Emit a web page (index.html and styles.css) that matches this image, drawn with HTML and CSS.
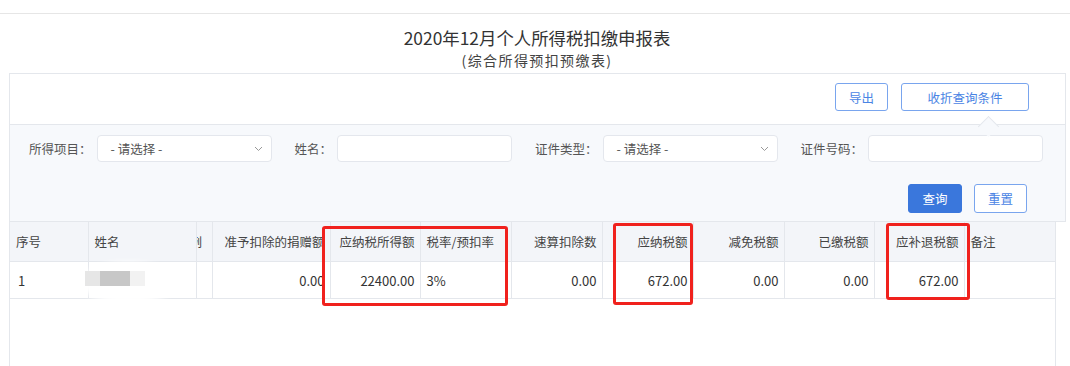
FILE: index.html
```html
<!DOCTYPE html>
<html lang="zh-CN">
<head>
    <meta charset="UTF-8">
    <meta name="viewport" content="width=device-width, initial-scale=1.0">
    <title>个人所得税扣缴申报表</title>
    <link rel="stylesheet" href="styles.css">
</head>
<body>
    <div class="topbar"></div>

    <div class="heading">
        <h1>2020年12月个人所得税扣缴申报表</h1>
        <p>(综合所得预扣预缴表)</p>
    </div>

    <div class="panel">
        <div class="toolbar">
            <button class="btn btn-export">导出</button>
            <button class="btn btn-toggle">收折查询条件</button>
        </div>

        <div class="filter">
            <span class="notch"></span>
            <div class="filter-row">
                <div class="field">
                    <label>所得项目<span class="colon">：</span></label>
                    <div class="control select">
                        <span>- 请选择 -</span>
                        <svg width="9" height="6" viewBox="0 0 9 6"><path d="M1 1l3.5 3.5L8 1" fill="none" stroke="#999" stroke-width="1"/></svg>
                    </div>
                </div>
                <div class="field">
                    <label>姓名<span class="colon">：</span></label>
                    <div class="control"></div>
                </div>
                <div class="field">
                    <label>证件类型<span class="colon">：</span></label>
                    <div class="control select">
                        <span>- 请选择 -</span>
                        <svg width="9" height="6" viewBox="0 0 9 6"><path d="M1 1l3.5 3.5L8 1" fill="none" stroke="#999" stroke-width="1"/></svg>
                    </div>
                </div>
                <div class="field">
                    <label>证件号码<span class="colon">：</span></label>
                    <div class="control"></div>
                </div>
            </div>
            <div class="filter-actions">
                <button class="btn btn-primary">查询</button>
                <button class="btn btn-reset">重置</button>
            </div>
        </div>
    </div>

    <div class="table-wrap">
        <table>
            <colgroup>
                <col style="width:78px"><col style="width:108px"><col style="width:16px"><col style="width:118px">
                <col style="width:90px"><col style="width:91px"><col style="width:91px"><col style="width:91px">
                <col style="width:91px"><col style="width:90px"><col style="width:90px"><col>
            </colgroup>
            <thead>
                <tr>
                    <th>序号</th>
                    <th>姓名</th>
                    <th class="clipped"><span>例</span></th>
                    <th class="num">准予扣除的捐赠额</th>
                    <th class="num">应纳税所得额</th>
                    <th>税率/预扣率</th>
                    <th class="num">速算扣除数</th>
                    <th class="num">应纳税额</th>
                    <th class="num">减免税额</th>
                    <th class="num">已缴税额</th>
                    <th class="num">应补退税额</th>
                    <th>备注</th>
                </tr>
            </thead>
            <tbody>
                <tr>
                    <td class="idx">1</td>
                    <td></td>
                    <td></td>
                    <td class="num">0.00</td>
                    <td class="num">22400.00</td>
                    <td>3%</td>
                    <td class="num">0.00</td>
                    <td class="num">672.00</td>
                    <td class="num">0.00</td>
                    <td class="num">0.00</td>
                    <td class="num">672.00</td>
                    <td></td>
                </tr>
            </tbody>
        </table>

        <!-- blurred name -->
        <div class="blur-blob"></div>
        <div class="blur-name"><i></i><i></i><i></i></div>

        <!-- highlight boxes -->
        <div class="mark mark-1"></div>
        <div class="mark mark-2"></div>
        <div class="mark mark-3"></div>
    </div>
</body>
</html>
```

FILE: styles.css
```css
body {
    margin: 0;
    background: #fff;
    font-family: "Noto Sans CJK SC", "Noto Sans", sans-serif;
    color: #333;
}

.topbar {
    height: 13px;
    border-bottom: 1px solid #e6e6e6;
}

.heading {
    text-align: center;
    padding-left: 4px;
    margin-top: 13px;
}

.heading h1 {
    margin: 0;
    font-size: 17.4px;
    font-weight: normal;
    line-height: 22px;
    color: #333;
}

.heading p {
    margin: 3px 0 0;
    font-size: 14px;
    line-height: 16px;
    letter-spacing: 1.4px;
    color: #444;
}

.panel {
    margin: 5px 0 0 9px;
    width: 1057px;
    box-sizing: border-box;
    border: 1px solid #e4e7ec;
}

.toolbar {
    height: 50px;
    display: flex;
    justify-content: flex-end;
    align-items: flex-start;
    gap: 13px;
    padding: 9px 36px 0 0;
    box-sizing: border-box;
}

.btn {
    height: 28px;
    padding: 0;
    border: 1px solid #79a5ee;
    border-radius: 3px;
    background: #fff;
    color: #4a84e4;
    font-family: inherit;
    font-size: 12.5px;
    cursor: pointer;
}

.btn-export {
    width: 53px;
}

.btn-toggle {
    width: 128px;
}

.filter {
    position: relative;
    height: 97px;
    box-sizing: border-box;
    padding: 10px 38px 0 19px;
    background: #f7f9fc;
    border-top: 1px solid #e4e7ec;
}

.notch {
    position: absolute;
    top: -6px;
    left: 971px;
    width: 14px;
    height: 14px;
    background: #f7f9fc;
    border-top: 1px solid #e4e7ec;
    border-left: 1px solid #e4e7ec;
    transform: rotate(45deg);
}

.filter-row {
    display: flex;
    gap: 23px;
}

.field {
    display: flex;
    align-items: center;
    gap: 5px;
}

.field label {
    font-size: 12.5px;
    color: #555;
    white-space: nowrap;
}

.colon {
    font-family: "Noto Sans CJK TC", sans-serif;
}

.control {
    width: 175px;
    height: 27px;
    box-sizing: border-box;
    background: #fff;
    border: 1px solid #e4e7ed;
    border-radius: 4px;
}

.select {
    display: flex;
    align-items: center;
    justify-content: space-between;
    padding: 0 8px 0 13px;
    font-size: 12.5px;
    color: #555;
}

.filter-actions {
    display: flex;
    justify-content: flex-end;
    gap: 12px;
    margin-top: 22px;
}

.btn-primary {
    width: 54px;
    height: 29px;
    background: #3a77dc;
    border-color: #3a77dc;
    color: #fff;
}

.btn-reset {
    width: 53px;
    height: 29px;
}

.table-wrap {
    position: relative;
    margin-left: 9px;
    width: 1047px;
    height: 150px;
    box-sizing: border-box;
    border-left: 1px solid #e4e7ec;
    border-right: 1px solid #e4e7ec;
}

table {
    width: 100%;
    table-layout: fixed;
    border-collapse: collapse;
    font-size: 12.5px;
}

th,
td {
    padding: 0 6px;
    border-right: 1px solid #e4e7ec;
    border-bottom: 1px solid #e4e7ec;
    text-align: left;
    white-space: nowrap;
    overflow: hidden;
}

th:last-child,
td:last-child {
    border-right: none;
}

th {
    height: 39px;
    background: #f3f5f9;
    font-weight: normal;
    color: #444;
}

td {
    height: 36px;
    color: #333;
    font-size: 13px;
}

.num {
    text-align: right;
    padding-right: 5px;
}

td.idx {
    padding-left: 8px;
}

th.clipped {
    padding: 0;
}

th.clipped span {
    display: inline-block;
    margin-left: -7px;
}

.blur-blob {
    position: absolute;
    left: 71px;
    top: 40px;
    width: 94px;
    height: 42px;
    background: #fff;
    border-radius: 50%;
    filter: blur(3px);
}

.blur-name {
    position: absolute;
    left: 75px;
    top: 49px;
    display: flex;
    height: 15px;
}

.blur-name i {
    display: block;
    height: 15px;
}

.blur-name i:nth-child(1) {
    width: 15px;
    background: #e6e6e6;
}

.blur-name i:nth-child(2) {
    width: 30px;
    background: #c7c7c7;
}

.blur-name i:nth-child(3) {
    width: 15px;
    background: #f2f2f2;
}

.mark {
    position: absolute;
    box-sizing: border-box;
    border: 3px solid #f0211d;
    border-radius: 3px;
}

.mark-1 {
    left: 312px;
    top: 4px;
    width: 186px;
    height: 80px;
}

.mark-2 {
    left: 603px;
    top: 1px;
    width: 80px;
    height: 82px;
}

.mark-3 {
    left: 876px;
    top: 1px;
    width: 84px;
    height: 77px;
}
```
